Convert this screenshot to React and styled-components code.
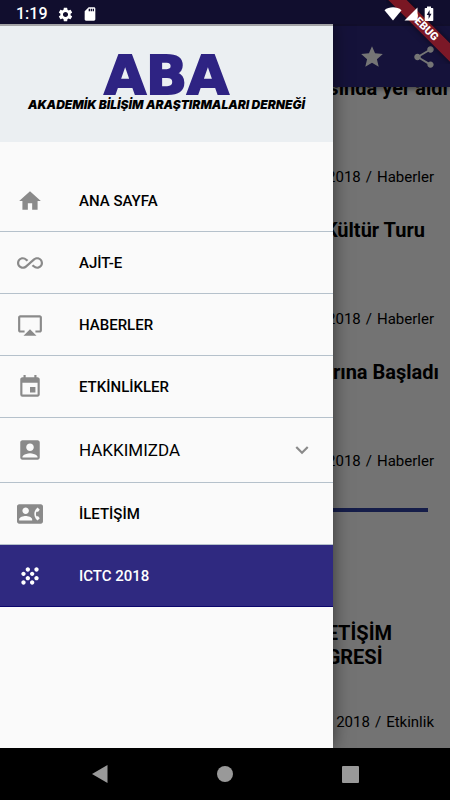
import React from "react";
import styled, { createGlobalStyle, css } from "styled-components";
import {
  MdAccountBox,
  MdAirplay,
  MdAllInclusive,
  MdContactPhone,
  MdEvent,
  MdExpandMore,
  MdGrain,
  MdHome,
  MdSdCard,
  MdSettings,
  MdShare,
  MdStar,
} from "react-icons/md";

const brand = "#2e287f";

const GlobalStyle = createGlobalStyle`
  * { box-sizing: border-box; }
  body { margin: 0; background: #000; font-family: Roboto, sans-serif; }
  h2, p, ul { margin: 0; padding: 0; }
  button { font: inherit; border: 0; background: none; padding: 0; cursor: pointer; }
`;

const Device = styled.div`
  display: flex;
  flex-direction: column;
  height: 100vh;
  overflow: hidden;
  position: relative;
`;

const StatusBar = styled.header`
  flex: none;
  display: flex;
  align-items: center;
  height: 24px;
  padding: 4px 16px 0;
  background: #110e2e;
  color: #fff;
`;

const Clock = styled.time`
  font-size: 16px;
  font-weight: 500;
  line-height: 20px;
  margin-right: 9px;
`;

const StatusIcons = styled.div`
  display: flex;
  align-items: center;
  gap: ${(p) => p.$gap}px;
  margin-left: ${(p) => (p.$end ? "auto" : 0)};
  position: relative;
  z-index: 5;
`;

const Stage = styled.div`
  flex: 1;
  min-height: 0;
  position: relative;
  overflow: hidden;
  display: flex;
  flex-direction: column;
  background: #fafafa;
`;

const AppBar = styled.div`
  flex: none;
  display: flex;
  align-items: center;
  justify-content: flex-end;
  gap: 26px;
  height: 63px;
  padding-right: 13px;
  border-top: 2px solid #25205f;
  background: ${brand};
  box-shadow: 0 2px 5px rgba(0, 0, 0, 0.4);
  z-index: 1;
`;

const BarButton = styled.button`
  display: flex;
  color: #fff;
  font-size: 26px;
`;

const Feed = styled.main`
  margin-top: -11px;
  color: #000;
`;

const Card = styled.article`
  display: flex;
  flex-direction: column;
  align-items: flex-end;
  gap: ${(p) => (p.$tall ? 43 : 67)}px;
  padding-bottom: 31px;
`;

const Title = styled.h2`
  font-size: 20px;
  font-weight: 700;
  line-height: 24px;
  white-space: pre-line;
  margin-right: ${(p) => p.$inset}px;
`;

const Meta = styled.p`
  display: flex;
  gap: 5px;
  font-size: 15px;
  line-height: 20px;
  margin-right: 16px;
`;

const Divider = styled.hr`
  height: 4px;
  border: 0;
  margin: 6px 22px 109px;
  background: #2f3fa0;
`;

const Scrim = styled.div`
  position: absolute;
  inset: 0;
  z-index: 2;
  background: rgba(0, 0, 0, 0.54);
`;

const Drawer = styled.aside`
  position: absolute;
  inset: 0 auto 0 0;
  z-index: 3;
  width: min(333px, 100% - 56px);
  background: #fafafa;
  border-top: 2px solid #a3a3a6;
  box-shadow: 0 0 16px rgba(0, 0, 0, 0.55);
`;

const DrawerHeader = styled.div`
  display: flex;
  flex-direction: column;
  align-items: center;
  height: 116px;
  padding-top: 29px;
  background: #ebeff2;
`;

const LogoName = styled.div`
  font: 700 54px/42px "DejaVu Sans", sans-serif;
  color: #2e2383;
  -webkit-text-stroke: 2px #2e2383;
`;

const LogoTagline = styled.div`
  font: italic 900 12px/16px Inter, sans-serif;
  color: #000;
  white-space: nowrap;
`;

const Menu = styled.ul`
  list-style: none;
  padding-top: 28px;
`;

const MenuLink = styled.a`
  display: flex;
  align-items: center;
  width: 100%;
  gap: 36px;
  height: ${(p) => (p.$group ? 65 : 62)}px;
  padding: 0 18px 0 17px;
  border-bottom: 1px solid #b5c1cb;
  color: #000;
  font-size: ${(p) => (p.$group ? 17 : 15)}px;
  font-weight: ${(p) => (p.$group ? 400 : 500)};
  text-decoration: none;
  ${(p) =>
    p.$active &&
    css`
      background: #2f2980;
      border-bottom-color: #0c066c;
      color: #fff;
    `}
`;

const MenuIcon = styled.span`
  display: flex;
  font-size: 26px;
  color: ${(p) => (p.$active ? "#fff" : "#8a8a8a")};
`;

const Chevron = styled(MenuIcon)`
  margin-left: auto;
`;

const DebugCorner = styled.div`
  position: absolute;
  top: 0;
  right: 0;
  z-index: 4;
  width: 64px;
  height: 64px;
  overflow: hidden;
  pointer-events: none;
`;

const DebugRibbon = styled.div`
  position: absolute;
  top: 20px;
  left: -12px;
  width: 100px;
  height: 13px;
  transform: rotate(45deg);
  background: rgba(183, 28, 28, 0.63);
  box-shadow: 0 0 6px rgba(0, 0, 0, 0.5);
  color: #fff;
  font-size: 11px;
  font-weight: 900;
  line-height: 13px;
  text-align: center;
`;

const NavBar = styled.nav`
  flex: none;
  display: flex;
  justify-content: center;
  height: 52px;
  background: #000;
`;

const NavButton = styled.button`
  flex: 0 1 125px;
  display: flex;
  align-items: center;
  justify-content: center;
`;

const Wifi = () => (
  <svg width="18" height="14" viewBox="0 0 18 14" fill="#fff" aria-hidden="true">
    <path d="M9 13.5 .5 3.2C5 -.6 13 -.6 17.5 3.2Z" />
  </svg>
);

const Signal = () => (
  <svg width="18" height="14" viewBox="0 0 18 14" fill="#fff" aria-hidden="true">
    <path d="M13.5 .5v13H.5Z" />
  </svg>
);

const Battery = () => (
  <svg width="10" height="16" viewBox="0 0 10 16" aria-hidden="true">
    <path fill="#fff" d="M3 .5h4V2h1.500q.8 0 .8.8v11.400q0 .8-.8.8h-7q-.8 0-.8-.8V2.800Q.7 2 1.500 2H3Z" />
    <path fill="#110e2e" d="M5.600 4 2.700 9h1.900v4l2.900-5.200H5.600Z" />
  </svg>
);

const menu = [
  { label: "ANA SAYFA", Icon: MdHome },
  { label: "AJİT-E", Icon: MdAllInclusive },
  { label: "HABERLER", Icon: MdAirplay },
  { label: "ETKİNLİKLER", Icon: MdEvent },
  { label: "HAKKIMIZDA", Icon: MdAccountBox, group: true },
  { label: "İLETİŞİM", Icon: MdContactPhone },
  { label: "ICTC 2018", Icon: MdGrain, active: true },
];

const news = [
  { title: "sında yer aldı", inset: 2 },
  { title: "Kültür Turu", inset: 25 },
  { title: "arına Başladı", inset: 11 },
];

const PostMeta = ({ year, category }) => (
  <Meta>
    <span>{year}</span>
    <span>/</span>
    <span>{category}</span>
  </Meta>
);

export default function App() {
  return (
    <Device lang="tr">
      <GlobalStyle />
      <StatusBar>
        <Clock>1:19</Clock>
        <StatusIcons $gap={8}>
          <MdSettings size={17} />
          <MdSdCard size={16} />
        </StatusIcons>
        <StatusIcons $gap={2} $end>
          <Wifi />
          <Signal />
          <Battery />
        </StatusIcons>
      </StatusBar>

      <Stage>
        <AppBar>
          <BarButton aria-label="Favoriler"><MdStar /></BarButton>
          <BarButton aria-label="Paylaş"><MdShare /></BarButton>
        </AppBar>
        <Feed>
          {news.map((n) => (
            <Card key={n.title}>
              <Title $inset={n.inset}>{n.title}</Title>
              <PostMeta year="2018" category="Haberler" />
            </Card>
          ))}
          <Divider />
          <Card $tall>
            <Title $inset={58}>{"ETİŞİM\nGRESİ"}</Title>
            <PostMeta year="2018" category="Etkinlik" />
          </Card>
        </Feed>
        <Scrim />
        <Drawer>
          <DrawerHeader>
            <LogoName>ABA</LogoName>
            <LogoTagline>AKADEMİK BİLİŞİM ARAŞTIRMALARI DERNEĞİ</LogoTagline>
          </DrawerHeader>
          <nav>
            <Menu>
              {menu.map(({ label, Icon, group, active }) => (
                <li key={label}>
                  <MenuLink
                    as={group ? "button" : "a"}
                    href={group ? undefined : "#"}
                    aria-expanded={group ? false : undefined}
                    $group={group}
                    $active={active}
                  >
                    <MenuIcon $active={active}><Icon /></MenuIcon>
                    {label}
                    {group && <Chevron><MdExpandMore /></Chevron>}
                  </MenuLink>
                </li>
              ))}
            </Menu>
          </nav>
        </Drawer>
      </Stage>

      <DebugCorner>
        <DebugRibbon>DEBUG</DebugRibbon>
      </DebugCorner>

      <NavBar>
        <NavButton aria-label="Geri">
          <svg width="18" height="20" viewBox="0 0 18 20" fill="#999"><path d="M16.500 1v18L1 10Z" /></svg>
        </NavButton>
        <NavButton aria-label="Ana ekran">
          <svg width="16" height="16" viewBox="0 0 16 16" fill="#999"><circle cx="8" cy="8" r="8" /></svg>
        </NavButton>
        <NavButton aria-label="Son uygulamalar">
          <svg width="17" height="17" viewBox="0 0 17 17" fill="#999"><rect width="17" height="17" rx="1" /></svg>
        </NavButton>
      </NavBar>
    </Device>
  );
}
